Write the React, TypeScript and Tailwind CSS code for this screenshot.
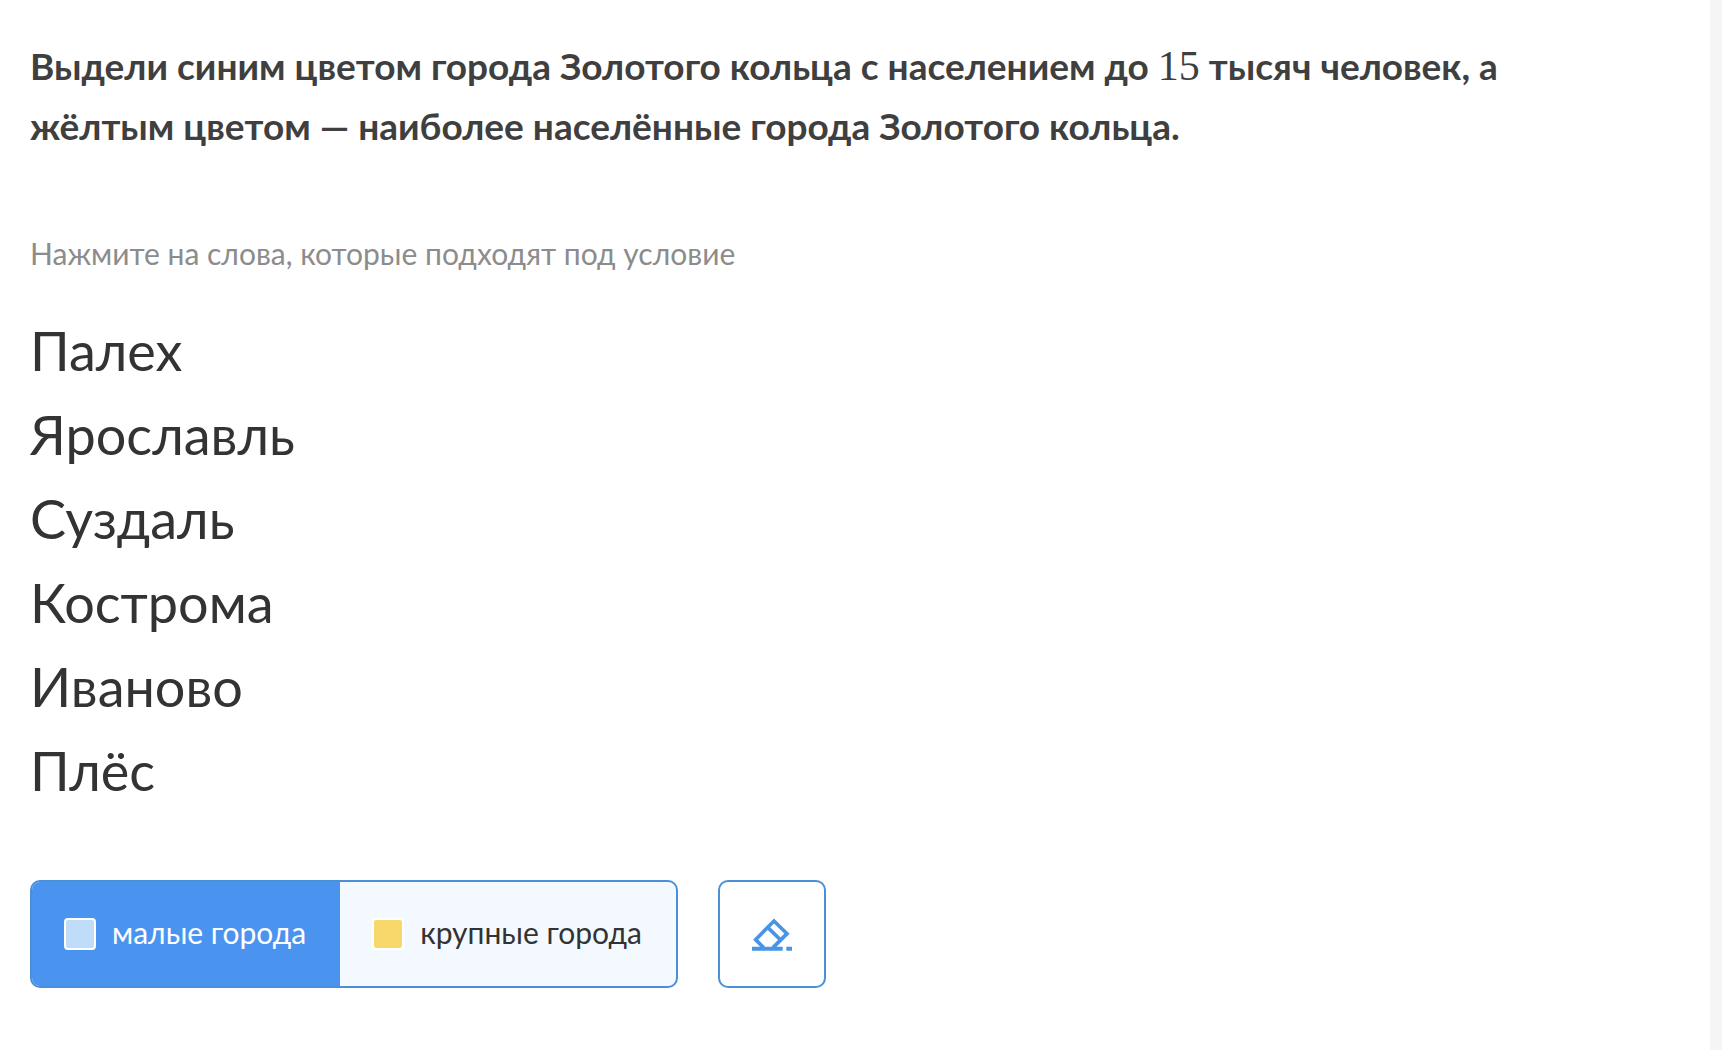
import { useState } from "react";
import clsx from "clsx";

type Tool = "small" | "large" | "eraser";

const cities = ["Палех", "Ярославль", "Суздаль", "Кострома", "Иваново", "Плёс"];

const groups: { id: Tool; label: string; swatch: string }[] = [
  { id: "small", label: "малые города", swatch: "bg-[#bfdcf9]" },
  { id: "large", label: "крупные города", swatch: "bg-[#f8d86b]" },
];

const EraserIcon = () => (
  <svg
    viewBox="0 0 126 105"
    className="h-[35px] w-[42px]"
    fill="none"
    stroke="currentColor"
    strokeWidth="11"
    aria-hidden="true"
  >
    <path d="M38 92 L14 68 L69 12 L108 50 L66 92" />
    <path d="M50 31 L89 69" />
    <path d="M3 95 H95 M106 95 H123" strokeWidth="12" />
  </svg>
);

const App = () => {
  const [tool, setTool] = useState<Tool>("small");
  const [marks, setMarks] = useState<Record<string, Tool>>({});

  return (
    <div className="flex min-h-screen bg-[#f5f5f5] pr-3 font-['Lato','Open_Sans',sans-serif]">
      <main className="flex-1 bg-white px-[30px] pt-9 pb-15">
        {/* task */}
        <h1 className="max-w-[1500px] text-[37px] leading-[60px] font-bold text-[#3f3f3f]">
          Выдели синим цветом города Золотого кольца с населением до{" "}
          <span className="font-['Liberation_Serif',serif] text-[42px] leading-none font-normal">
            15
          </span>{" "}
          тысяч человек, а жёлтым цветом — наиболее населённые города Золотого
          кольца.
        </h1>
        <p className="mt-[77px] text-[30px] leading-10 text-[#8c8c8c]">
          Нажмите на слова, которые подходят под условие
        </p>

        {/* words */}
        <ul className="mt-9 text-[54px] leading-[84px] text-[#333]">
          {cities.map((city) => (
            <li key={city}>
              <button
                type="button"
                onClick={() => setMarks({ ...marks, [city]: tool })}
                className={clsx(
                  "block cursor-pointer",
                  marks[city] === "small" && "bg-[#bfdcf9]",
                  marks[city] === "large" && "bg-[#f8d86b]"
                )}
              >
                {city}
              </button>
            </li>
          ))}
        </ul>

        {/* markers */}
        <div className="mt-[67px] flex gap-10">
          <div className="flex h-[108px] overflow-hidden rounded-[10px] border-2 border-[#4a90d9] bg-[#f4f9ff]">
            {groups.map(({ id, label, swatch }) => (
              <button
                key={id}
                type="button"
                aria-pressed={tool === id}
                onClick={() => setTool(id)}
                className={clsx(
                  "flex cursor-pointer items-center gap-4 pr-[34px] pl-8 text-[30px] leading-10",
                  tool === id ? "bg-[#4a94f0] text-white" : "text-[#333]"
                )}
              >
                <span
                  className={clsx("size-8 rounded-sm border-2 border-white", swatch)}
                />
                <span className="pb-1">{label}</span>
              </button>
            ))}
          </div>
          <button
            type="button"
            aria-label="Ластик"
            aria-pressed={tool === "eraser"}
            onClick={() => setTool("eraser")}
            className="flex size-[108px] cursor-pointer items-center justify-center rounded-[10px] border-2 border-[#4a90d9] text-[#4a94e4]"
          >
            <EraserIcon />
          </button>
        </div>
      </main>
    </div>
  );
};

export default App;
